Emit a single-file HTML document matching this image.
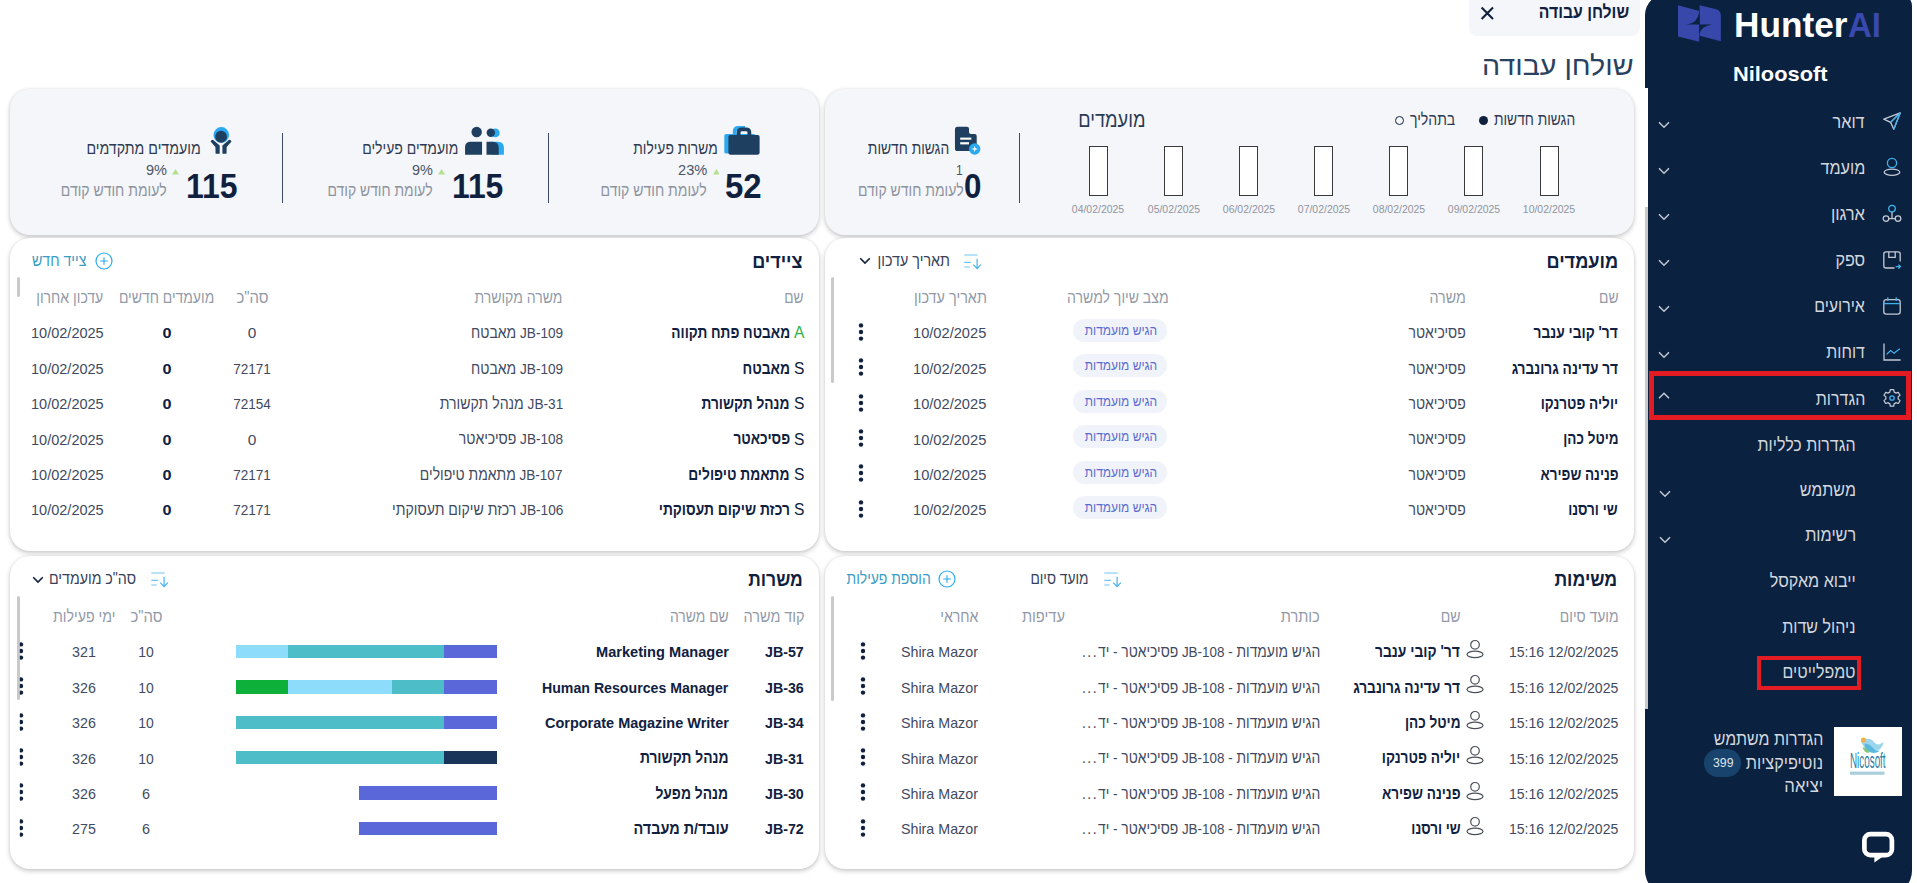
<!DOCTYPE html><html lang="he"><head><meta charset="utf-8"><title>HunterAI</title><style>html,body{margin:0;padding:0;background:#fff;overflow:hidden}body{width:1917px;height:883px;position:relative;font-family:"Liberation Sans",sans-serif;}div,svg{box-sizing:border-box}</style></head><body>
<div style="position:absolute;left:10.3px;top:88.5px;width:809.2px;height:146.2px;background:#f5f6fa;border-radius:20px;box-shadow:0 2px 5px rgba(0,0,0,.21),0 0 3px rgba(0,0,0,.07);"></div>
<div style="position:absolute;left:825.0px;top:88.5px;width:809.0px;height:146.2px;background:#f5f6fa;border-radius:20px;box-shadow:0 2px 5px rgba(0,0,0,.21),0 0 3px rgba(0,0,0,.07);"></div>
<div style="position:absolute;left:10.3px;top:238.0px;width:809.2px;height:313.0px;background:#fff;border-radius:20px;box-shadow:0 2px 5px rgba(0,0,0,.21),0 0 3px rgba(0,0,0,.07);"></div>
<div style="position:absolute;left:825.0px;top:238.0px;width:809.0px;height:313.0px;background:#fff;border-radius:20px;box-shadow:0 2px 5px rgba(0,0,0,.21),0 0 3px rgba(0,0,0,.07);"></div>
<div style="position:absolute;left:10.3px;top:556.0px;width:809.2px;height:313.2px;background:#fff;border-radius:20px;box-shadow:0 2px 5px rgba(0,0,0,.21),0 0 3px rgba(0,0,0,.07);"></div>
<div style="position:absolute;left:825.0px;top:556.0px;width:809.0px;height:313.2px;background:#fff;border-radius:20px;box-shadow:0 2px 5px rgba(0,0,0,.21),0 0 3px rgba(0,0,0,.07);"></div>
<div style="position:absolute;left:1469.0px;top:0.0px;width:171.0px;height:36.0px;background:#f5f6fa;border-radius:0 0 8px 8px;"></div>
<svg style="position:absolute;left:1480px;top:6px" width="15" height="15" viewBox="0 0 15 15"><path d="M1.6 1.6 L13 13 M13 1.6 L1.6 13" stroke="#10213f" stroke-width="2.1" fill="none"/></svg>
<div style="position:absolute;left:1645.0px;top:-6.0px;width:267.0px;height:900.0px;background:#0b2140;border-radius:21px 12px 23px 23px;"></div>
<div style="position:absolute;left:1645.0px;top:88.0px;width:3.0px;height:119.0px;background:#fff;"></div>
<div style="position:absolute;left:1645.0px;top:207.0px;width:3.0px;height:502.0px;background:#c9c9c9;"></div>
<svg style="position:absolute;left:1670px;top:0px" width="60" height="48" viewBox="0 0 60 48"><path d="M8 5.2 L29.2 10.9 L29.2 41.8 L8 36.4 Z" fill="#3848aa"/><path d="M29.6 5.2 L46.2 9.3 Q50.8 10.6 50.8 15.2 L50.8 41.3 L29.6 35.7 Z" fill="#3848aa"/><path d="M16.6 24.6 Q27.6 23.4 29 12.4 L29.6 12.4 L29.6 24.6 Z" fill="#0b2140"/><path d="M29.2 24.4 L42 24.4 Q31.4 26 29.8 33 L29.2 33 Z" fill="#0b2140"/></svg>
<svg style="position:absolute;left:1882.4px;top:110.8px" width="20" height="20" viewBox="0 0 20 20"><path d="M18.2 1.8 L1.8 8.2 L8.6 11.4 L11.8 18.2 Z M8.6 11.4 L18.2 1.8" fill="none" stroke="#c3c9d3" stroke-width="1.3" stroke-linejoin="round"/><path d="M18.2 1.8 L11.8 18.2" stroke="#3fb2ee" stroke-width="1.3" fill="none"/><path d="M18.2 1.8 L8.6 11.4" stroke="#3fb2ee" stroke-width="1.3"/></svg>
<svg style="position:absolute;left:1657.8px;top:120.5px" width="12" height="8" viewBox="0 0 12 8"><path d="M1 1.2 L6 6.2 L11 1.2" fill="none" stroke="#c3c9d3" stroke-width="1.5"/></svg>
<svg style="position:absolute;left:1882.4px;top:157.2px" width="20" height="20" viewBox="0 0 20 20"><circle cx="10" cy="6" r="4.6" fill="none" stroke="#3fb2ee" stroke-width="1.3"/><ellipse cx="10" cy="15.2" rx="7.8" ry="3.1" fill="none" stroke="#c3c9d3" stroke-width="1.3"/></svg>
<svg style="position:absolute;left:1657.8px;top:166.5px" width="12" height="8" viewBox="0 0 12 8"><path d="M1 1.2 L6 6.2 L11 1.2" fill="none" stroke="#c3c9d3" stroke-width="1.5"/></svg>
<svg style="position:absolute;left:1882.4px;top:203.6px" width="20" height="20" viewBox="0 0 20 20"><circle cx="10" cy="4.6" r="3.3" fill="none" stroke="#3fb2ee" stroke-width="1.3"/><circle cx="4" cy="14.6" r="2.8" fill="none" stroke="#c3c9d3" stroke-width="1.3"/><circle cx="16" cy="14.6" r="2.8" fill="none" stroke="#c3c9d3" stroke-width="1.3"/><path d="M10 7.9 V14.6 M6.8 14.6 H13.2" stroke="#c3c9d3" stroke-width="1.3" fill="none"/></svg>
<svg style="position:absolute;left:1657.8px;top:212.5px" width="12" height="8" viewBox="0 0 12 8"><path d="M1 1.2 L6 6.2 L11 1.2" fill="none" stroke="#c3c9d3" stroke-width="1.5"/></svg>
<svg style="position:absolute;left:1882.4px;top:249.6px" width="20" height="20" viewBox="0 0 20 20"><path d="M12.5 18 H4 Q1.8 18 1.8 15.8 V4 Q1.8 1.8 4 1.8 H16 Q18.2 1.8 18.2 4 V11.5" fill="none" stroke="#c3c9d3" stroke-width="1.3"/><path d="M6.8 1.8 V7.4 H13.2 V1.8" fill="none" stroke="#c3c9d3" stroke-width="1.3"/><path d="M13.6 16.6 H18.2 M16.4 14.6 L18.4 16.6 L16.4 18.6" fill="none" stroke="#3fb2ee" stroke-width="1.3"/></svg>
<svg style="position:absolute;left:1657.8px;top:258.5px" width="12" height="8" viewBox="0 0 12 8"><path d="M1 1.2 L6 6.2 L11 1.2" fill="none" stroke="#c3c9d3" stroke-width="1.5"/></svg>
<svg style="position:absolute;left:1882.4px;top:295.8px" width="20" height="20" viewBox="0 0 20 20"><rect x="1.8" y="3.6" width="16.4" height="14.6" rx="2.4" fill="none" stroke="#c3c9d3" stroke-width="1.3"/><path d="M1.8 7.6 H18.2" stroke="#3fb2ee" stroke-width="1.3"/><path d="M5.8 1.2 V5 M14.2 1.2 V5" stroke="#3fb2ee" stroke-width="1.3"/></svg>
<svg style="position:absolute;left:1657.8px;top:304.5px" width="12" height="8" viewBox="0 0 12 8"><path d="M1 1.2 L6 6.2 L11 1.2" fill="none" stroke="#c3c9d3" stroke-width="1.5"/></svg>
<svg style="position:absolute;left:1882.4px;top:342.4px" width="20" height="20" viewBox="0 0 20 20"><path d="M2 1.6 V18 H18.6" fill="none" stroke="#c3c9d3" stroke-width="1.3"/><path d="M4.6 12.4 L8.6 8.6 L12 11.2 L17.8 6.8" fill="none" stroke="#3fb2ee" stroke-width="1.3"/></svg>
<svg style="position:absolute;left:1657.8px;top:350.8px" width="12" height="8" viewBox="0 0 12 8"><path d="M1 1.2 L6 6.2 L11 1.2" fill="none" stroke="#c3c9d3" stroke-width="1.5"/></svg>
<svg style="position:absolute;left:1882.4px;top:388px" width="20" height="20" viewBox="0 0 20 20"><path d="M8.3 1.6 h3.4 l.5 2.5 a6.3 6.3 0 0 1 1.7 1 l2.4-.8 1.7 2.9-1.9 1.7 a6.3 6.3 0 0 1 0 2 l1.9 1.7-1.7 2.9-2.4-.8 a6.3 6.3 0 0 1-1.7 1 l-.5 2.5 h-3.4 l-.5-2.5 a6.3 6.3 0 0 1-1.7-1 l-2.4.8-1.7-2.9 1.9-1.7 a6.3 6.3 0 0 1 0-2 l-1.9-1.7 1.7-2.9 2.4.8 a6.3 6.3 0 0 1 1.7-1 z" fill="none" stroke="#c3c9d3" stroke-width="1.25" stroke-linejoin="round"/><circle cx="10" cy="10" r="2.2" fill="none" stroke="#3fb2ee" stroke-width="1.3"/></svg>
<svg style="position:absolute;left:1657.8px;top:391.5px" width="12" height="8" viewBox="0 0 12 8"><path d="M1 6.2 L6 1.2 L11 6.2" fill="none" stroke="#c3c9d3" stroke-width="1.5"/></svg>
<div style="position:absolute;left:1648.5px;top:370.5px;width:262px;height:49px;border:5.3px solid #e31b23"></div>
<div style="position:absolute;left:1756.5px;top:656px;width:104.5px;height:34px;border:4.5px solid #e31b23"></div>
<svg style="position:absolute;left:1659px;top:490.0px" width="12" height="8" viewBox="0 0 12 8"><path d="M1 1.2 L6 6.2 L11 1.2" fill="none" stroke="#c3c9d3" stroke-width="1.5"/></svg>
<svg style="position:absolute;left:1659px;top:535.5px" width="12" height="8" viewBox="0 0 12 8"><path d="M1 1.2 L6 6.2 L11 1.2" fill="none" stroke="#c3c9d3" stroke-width="1.5"/></svg>
<div style="position:absolute;left:1833.7px;top:726.8px;width:68.5px;height:68.8px;background:#fff;"></div>
<svg style="position:absolute;left:1833.7px;top:726.8px" width="68.5" height="68.8" viewBox="0 0 68.5 68.8"><path d="M27 14.5 C31 10.5 37 11 40 15 C43 19 47 17.5 49.5 14.5 C49 21 44 25.5 38 25 C33 24.6 30 21 27 14.5 Z" fill="#9bd6ec"/><path d="M30.5 17 C34 16 37 18.5 39.5 21.5 C41.5 24 44 24.5 46 23.5 C43 26.5 38 26.5 34.5 24.5 C32 23 30.5 20.5 30.5 17 Z" fill="#5bb8dd"/><path d="M28.5 20 C31 20.5 33.5 22.5 35.5 25.5 C32.5 26.5 29.5 24.5 28.5 20 Z" fill="#86c96f"/><circle cx="29.5" cy="13" r="2.6" fill="#f3b04a"/><rect x="16" y="44.6" width="34.5" height="3.2" fill="#8fbdd2" opacity=".75"/></svg>
<div style="position:absolute;left:1704.0px;top:748.8px;width:37.0px;height:28.0px;background:#17436d;border-radius:14px;"></div>
<svg style="position:absolute;left:1860px;top:830px" width="36" height="34" viewBox="0 0 36 34"><rect x="4.4" y="4.2" width="27.5" height="21" rx="6" fill="none" stroke="#fff" stroke-width="4.7"/><path d="M14.4 24 V32.4 L26.5 24 Z" fill="#fff"/></svg>
<div style="position:absolute;left:1479px;top:116px;width:9px;height:9px;border-radius:50%;background:#10213f"></div>
<div style="position:absolute;left:1394.8px;top:115.8px;width:9.2px;height:9.2px;border-radius:50%;border:1.7px solid #10213f"></div>
<div style="position:absolute;left:1539.5px;top:146.3px;width:19.2px;height:50.2px;background:#fff;border:1.2px solid #3a3a3a"></div>
<div style="position:absolute;left:1464.3px;top:146.3px;width:19.2px;height:50.2px;background:#fff;border:1.2px solid #3a3a3a"></div>
<div style="position:absolute;left:1389.2px;top:146.3px;width:19.2px;height:50.2px;background:#fff;border:1.2px solid #3a3a3a"></div>
<div style="position:absolute;left:1314.0px;top:146.3px;width:19.2px;height:50.2px;background:#fff;border:1.2px solid #3a3a3a"></div>
<div style="position:absolute;left:1238.8px;top:146.3px;width:19.2px;height:50.2px;background:#fff;border:1.2px solid #3a3a3a"></div>
<div style="position:absolute;left:1163.7px;top:146.3px;width:19.2px;height:50.2px;background:#fff;border:1.2px solid #3a3a3a"></div>
<div style="position:absolute;left:1088.5px;top:146.3px;width:19.2px;height:50.2px;background:#fff;border:1.2px solid #3a3a3a"></div>
<div style="position:absolute;left:1019.0px;top:132.5px;width:1.0px;height:70.1px;background:#3a4a66;"></div>
<div style="position:absolute;left:548.0px;top:132.5px;width:1.0px;height:70.1px;background:#3a4a66;"></div>
<div style="position:absolute;left:282.0px;top:132.5px;width:1.0px;height:70.1px;background:#3a4a66;"></div>
<svg style="position:absolute;left:940px;top:120px" width="60" height="40" viewBox="0 0 60 40"><path d="M17.6 6.8 H27 Q29 6.8 29 8.8 V12 Q29 14.05 31 14.05 H34.7 Q36.7 14.05 36.7 16 V31 H17.6 Q14.95 31 14.95 28.4 V9.4 Q14.95 6.8 17.6 6.8 Z" fill="#1e3f5f"/><rect x="20.2" y="17.6" width="11.1" height="2.1" fill="#fff"/><rect x="20.2" y="22.2" width="8.8" height="2.2" fill="#fff"/><circle cx="34.7" cy="29" r="5.7" fill="#2aa9f0"/><path d="M34.7 25.8 L35.4 28.3 L37.9 29 L35.4 29.7 L34.7 32.2 L34 29.7 L31.5 29 L34 28.3 Z" fill="#fff"/></svg>
<svg style="position:absolute;left:715px;top:120px" width="60" height="40" viewBox="0 0 60 40"><path d="M19.7 14.2 V11.6 Q19.7 8.0 23.3 8.0 H30" fill="none" stroke="#2aa9f0" stroke-width="3.8"/><rect x="9.3" y="14.05" width="31" height="19.5" rx="1.6" fill="#2aa9f0"/><path d="M23.65 15.2 V12.6 Q23.65 9.4 26.9 9.4 H31.1 Q34.35 9.4 34.35 12.6 V15.2" fill="none" stroke="#1e3f5f" stroke-width="3.8"/><rect x="13.4" y="14.95" width="31.2" height="19.7" rx="1.8" fill="#1e3f5f"/></svg>
<svg style="position:absolute;left:455px;top:120px" width="60" height="40" viewBox="0 0 60 40"><circle cx="40.3" cy="12.9" r="4.4" fill="#2aa9f0"/><path d="M36.5 21.75 H42.9 Q48.9 21.75 48.9 27.8 V34.66 H36.5 Z" fill="#2aa9f0"/><circle cx="21.66" cy="12" r="5.2" fill="#1e3f5f"/><path d="M15.6 21.75 H27.05 V34.66 H10.06 V27.3 Q10.06 21.75 15.6 21.75 Z" fill="#1e3f5f"/><circle cx="35.8" cy="12.8" r="4.2" fill="#1e3f5f"/><path d="M31.5 21.75 H37.7 Q43.7 21.75 43.7 27.8 V34.66 H31.5 Z" fill="#1e3f5f"/></svg>
<svg style="position:absolute;left:200px;top:120px" width="50" height="40" viewBox="0 0 50 40"><circle cx="21.3" cy="14.9" r="7.8" fill="#2aa9f0"/><circle cx="21.06" cy="16.76" r="5.9" fill="#1e3f5f"/><path d="M10.6 21.6 Q11.2 19.6 13 19.8 L19.7 25.6 V33.7 H15.6 L15.4 27 Z" fill="#1e3f5f"/><path d="M31.5 21.6 Q30.9 19.6 29.1 19.8 L22.4 25.6 V33.7 H26.5 L26.7 27 Z" fill="#1e3f5f"/></svg>
<svg style="position:absolute;left:712.5px;top:169.4px" width="6.8" height="5.6" viewBox="0 0 10 8" preserveAspectRatio="none"><path d="M0 8 L5 0 L10 8 Z" fill="#b5e08f"/></svg>
<svg style="position:absolute;left:437.6px;top:169.4px" width="7.2" height="5.6" viewBox="0 0 10 8" preserveAspectRatio="none"><path d="M0 8 L5 0 L10 8 Z" fill="#b5e08f"/></svg>
<svg style="position:absolute;left:172.0px;top:169.4px" width="7.0" height="5.6" viewBox="0 0 10 8" preserveAspectRatio="none"><path d="M0 8 L5 0 L10 8 Z" fill="#b5e08f"/></svg>
<svg style="position:absolute;left:858.8px;top:257.3px" width="12" height="8" viewBox="0 0 12 8"><path d="M1.2 1.2 L6 6 L10.8 1.2" fill="none" stroke="#10213f" stroke-width="1.6"/></svg>
<svg style="position:absolute;left:964px;top:253.5px" width="18" height="16" viewBox="0 0 18 16"><path d="M0.3 1 H13.7 M0.3 8.4 H6.9 M0.3 13 H5.7" stroke="#6cc6f3" stroke-width="1.15" fill="none"/><path d="M13.1 4.8 V14.4 M9.3 10.6 L13.1 14.6 L16.9 10.6" stroke="#45b4f0" stroke-width="1.2" fill="none"/></svg>
<div style="position:absolute;left:830.9px;top:277.0px;width:3.3px;height:105.7px;background:#c9c9c9;border-radius:1.5px;"></div>
<div style="position:absolute;left:1073.0px;top:318.9px;width:94.4px;height:23.2px;background:#f1f3fb;border-radius:12px;"></div>
<svg style="position:absolute;left:858.2px;top:321.8px;" width="6" height="20" viewBox="0 0 6 20"><circle cx="3" cy="3.4" r="2.2" fill="#10213f"/><circle cx="3" cy="10" r="2.2" fill="#10213f"/><circle cx="3" cy="16.6" r="2.2" fill="#10213f"/></svg>
<div style="position:absolute;left:1073.0px;top:354.3px;width:94.4px;height:23.2px;background:#f1f3fb;border-radius:12px;"></div>
<svg style="position:absolute;left:858.2px;top:357.2px;" width="6" height="20" viewBox="0 0 6 20"><circle cx="3" cy="3.4" r="2.2" fill="#10213f"/><circle cx="3" cy="10" r="2.2" fill="#10213f"/><circle cx="3" cy="16.6" r="2.2" fill="#10213f"/></svg>
<div style="position:absolute;left:1073.0px;top:389.7px;width:94.4px;height:23.2px;background:#f1f3fb;border-radius:12px;"></div>
<svg style="position:absolute;left:858.2px;top:392.6px;" width="6" height="20" viewBox="0 0 6 20"><circle cx="3" cy="3.4" r="2.2" fill="#10213f"/><circle cx="3" cy="10" r="2.2" fill="#10213f"/><circle cx="3" cy="16.6" r="2.2" fill="#10213f"/></svg>
<div style="position:absolute;left:1073.0px;top:425.1px;width:94.4px;height:23.2px;background:#f1f3fb;border-radius:12px;"></div>
<svg style="position:absolute;left:858.2px;top:428.0px;" width="6" height="20" viewBox="0 0 6 20"><circle cx="3" cy="3.4" r="2.2" fill="#10213f"/><circle cx="3" cy="10" r="2.2" fill="#10213f"/><circle cx="3" cy="16.6" r="2.2" fill="#10213f"/></svg>
<div style="position:absolute;left:1073.0px;top:460.5px;width:94.4px;height:23.2px;background:#f1f3fb;border-radius:12px;"></div>
<svg style="position:absolute;left:858.2px;top:463.4px;" width="6" height="20" viewBox="0 0 6 20"><circle cx="3" cy="3.4" r="2.2" fill="#10213f"/><circle cx="3" cy="10" r="2.2" fill="#10213f"/><circle cx="3" cy="16.6" r="2.2" fill="#10213f"/></svg>
<div style="position:absolute;left:1073.0px;top:495.7px;width:94.4px;height:23.2px;background:#f1f3fb;border-radius:12px;"></div>
<svg style="position:absolute;left:858.2px;top:498.6px;" width="6" height="20" viewBox="0 0 6 20"><circle cx="3" cy="3.4" r="2.2" fill="#10213f"/><circle cx="3" cy="10" r="2.2" fill="#10213f"/><circle cx="3" cy="16.6" r="2.2" fill="#10213f"/></svg>
<svg style="position:absolute;left:94.5px;top:251.5px" width="18" height="18" viewBox="0 0 18 18"><circle cx="9" cy="9" r="8" fill="none" stroke="#2aa9f0" stroke-width="1.2"/><path d="M9 5.2 V12.8 M5.2 9 H12.8" stroke="#2aa9f0" stroke-width="1.1"/></svg>
<div style="position:absolute;left:16.8px;top:277.0px;width:3.1px;height:20.0px;background:#c9c9c9;border-radius:1.5px;"></div>
<svg style="position:absolute;left:937.5px;top:569.5px" width="18" height="18" viewBox="0 0 18 18"><circle cx="9" cy="9" r="8" fill="none" stroke="#2aa9f0" stroke-width="1.2"/><path d="M9 5.2 V12.8 M5.2 9 H12.8" stroke="#2aa9f0" stroke-width="1.1"/></svg>
<svg style="position:absolute;left:1104px;top:572px" width="18" height="16" viewBox="0 0 18 16"><path d="M0.3 1 H13.7 M0.3 8.4 H6.9 M0.3 13 H5.7" stroke="#6cc6f3" stroke-width="1.15" fill="none"/><path d="M13.1 4.8 V14.4 M9.3 10.6 L13.1 14.6 L16.9 10.6" stroke="#45b4f0" stroke-width="1.2" fill="none"/></svg>
<div style="position:absolute;left:830.9px;top:595.7px;width:3.1px;height:105.8px;background:#c9c9c9;border-radius:1.5px;"></div>
<svg style="position:absolute;left:1464.6px;top:638.9px" width="20" height="20" viewBox="0 0 20 20"><circle cx="10" cy="5.8" r="4.3" fill="none" stroke="#4a4f58" stroke-width="1.2"/><ellipse cx="10" cy="15.4" rx="8" ry="3.2" fill="none" stroke="#4a4f58" stroke-width="1.2"/></svg>
<svg style="position:absolute;left:859.6px;top:640.8px;" width="6" height="20" viewBox="0 0 6 20"><circle cx="3" cy="3.4" r="2.2" fill="#10213f"/><circle cx="3" cy="10" r="2.2" fill="#10213f"/><circle cx="3" cy="16.6" r="2.2" fill="#10213f"/></svg>
<svg style="position:absolute;left:1464.6px;top:674.3px" width="20" height="20" viewBox="0 0 20 20"><circle cx="10" cy="5.8" r="4.3" fill="none" stroke="#4a4f58" stroke-width="1.2"/><ellipse cx="10" cy="15.4" rx="8" ry="3.2" fill="none" stroke="#4a4f58" stroke-width="1.2"/></svg>
<svg style="position:absolute;left:859.6px;top:676.2px;" width="6" height="20" viewBox="0 0 6 20"><circle cx="3" cy="3.4" r="2.2" fill="#10213f"/><circle cx="3" cy="10" r="2.2" fill="#10213f"/><circle cx="3" cy="16.6" r="2.2" fill="#10213f"/></svg>
<svg style="position:absolute;left:1464.6px;top:709.7px" width="20" height="20" viewBox="0 0 20 20"><circle cx="10" cy="5.8" r="4.3" fill="none" stroke="#4a4f58" stroke-width="1.2"/><ellipse cx="10" cy="15.4" rx="8" ry="3.2" fill="none" stroke="#4a4f58" stroke-width="1.2"/></svg>
<svg style="position:absolute;left:859.6px;top:711.6px;" width="6" height="20" viewBox="0 0 6 20"><circle cx="3" cy="3.4" r="2.2" fill="#10213f"/><circle cx="3" cy="10" r="2.2" fill="#10213f"/><circle cx="3" cy="16.6" r="2.2" fill="#10213f"/></svg>
<svg style="position:absolute;left:1464.6px;top:745.1px" width="20" height="20" viewBox="0 0 20 20"><circle cx="10" cy="5.8" r="4.3" fill="none" stroke="#4a4f58" stroke-width="1.2"/><ellipse cx="10" cy="15.4" rx="8" ry="3.2" fill="none" stroke="#4a4f58" stroke-width="1.2"/></svg>
<svg style="position:absolute;left:859.6px;top:747.0px;" width="6" height="20" viewBox="0 0 6 20"><circle cx="3" cy="3.4" r="2.2" fill="#10213f"/><circle cx="3" cy="10" r="2.2" fill="#10213f"/><circle cx="3" cy="16.6" r="2.2" fill="#10213f"/></svg>
<svg style="position:absolute;left:1464.6px;top:780.5px" width="20" height="20" viewBox="0 0 20 20"><circle cx="10" cy="5.8" r="4.3" fill="none" stroke="#4a4f58" stroke-width="1.2"/><ellipse cx="10" cy="15.4" rx="8" ry="3.2" fill="none" stroke="#4a4f58" stroke-width="1.2"/></svg>
<svg style="position:absolute;left:859.6px;top:782.4px;" width="6" height="20" viewBox="0 0 6 20"><circle cx="3" cy="3.4" r="2.2" fill="#10213f"/><circle cx="3" cy="10" r="2.2" fill="#10213f"/><circle cx="3" cy="16.6" r="2.2" fill="#10213f"/></svg>
<svg style="position:absolute;left:1464.6px;top:815.7px" width="20" height="20" viewBox="0 0 20 20"><circle cx="10" cy="5.8" r="4.3" fill="none" stroke="#4a4f58" stroke-width="1.2"/><ellipse cx="10" cy="15.4" rx="8" ry="3.2" fill="none" stroke="#4a4f58" stroke-width="1.2"/></svg>
<svg style="position:absolute;left:859.6px;top:817.6px;" width="6" height="20" viewBox="0 0 6 20"><circle cx="3" cy="3.4" r="2.2" fill="#10213f"/><circle cx="3" cy="10" r="2.2" fill="#10213f"/><circle cx="3" cy="16.6" r="2.2" fill="#10213f"/></svg>
<svg style="position:absolute;left:31.8px;top:575.6px" width="12" height="8" viewBox="0 0 12 8"><path d="M1.2 1.2 L6 6 L10.8 1.2" fill="none" stroke="#10213f" stroke-width="1.6"/></svg>
<svg style="position:absolute;left:151px;top:572px" width="18" height="16" viewBox="0 0 18 16"><path d="M0.3 1 H13.7 M0.3 8.4 H6.9 M0.3 13 H5.7" stroke="#6cc6f3" stroke-width="1.15" fill="none"/><path d="M13.1 4.8 V14.4 M9.3 10.6 L13.1 14.6 L16.9 10.6" stroke="#45b4f0" stroke-width="1.2" fill="none"/></svg>
<div style="position:absolute;left:17.0px;top:595.7px;width:2.6px;height:104.3px;background:#c9c9c9;border-radius:1.5px;"></div>
<div style="position:absolute;left:235.5px;top:644.7px;width:52.4px;height:13.6px;background:#8ddcfc;"></div>
<div style="position:absolute;left:287.7px;top:644.7px;width:156.7px;height:13.6px;background:#4dbdc8;"></div>
<div style="position:absolute;left:444.2px;top:644.7px;width:52.4px;height:13.6px;background:#5a67d8;"></div>
<svg style="position:absolute;left:18.3px;top:640.8px;clip-path:inset(0 0 0 1.5px);" width="6" height="20" viewBox="0 0 6 20"><circle cx="3" cy="3.4" r="2.2" fill="#10213f"/><circle cx="3" cy="10" r="2.2" fill="#10213f"/><circle cx="3" cy="16.6" r="2.2" fill="#10213f"/></svg>
<div style="position:absolute;left:235.5px;top:680.1px;width:52.4px;height:13.6px;background:#0db039;"></div>
<div style="position:absolute;left:287.7px;top:680.1px;width:104.6px;height:13.6px;background:#8ddcfc;"></div>
<div style="position:absolute;left:392.0px;top:680.1px;width:52.4px;height:13.6px;background:#4dbdc8;"></div>
<div style="position:absolute;left:444.2px;top:680.1px;width:52.4px;height:13.6px;background:#5a67d8;"></div>
<svg style="position:absolute;left:18.3px;top:676.2px;clip-path:inset(0 0 0 1.5px);" width="6" height="20" viewBox="0 0 6 20"><circle cx="3" cy="3.4" r="2.2" fill="#10213f"/><circle cx="3" cy="10" r="2.2" fill="#10213f"/><circle cx="3" cy="16.6" r="2.2" fill="#10213f"/></svg>
<div style="position:absolute;left:235.5px;top:715.5px;width:208.9px;height:13.6px;background:#4dbdc8;"></div>
<div style="position:absolute;left:444.2px;top:715.5px;width:52.4px;height:13.6px;background:#5a67d8;"></div>
<svg style="position:absolute;left:18.3px;top:711.6px;clip-path:inset(0 0 0 1.5px);" width="6" height="20" viewBox="0 0 6 20"><circle cx="3" cy="3.4" r="2.2" fill="#10213f"/><circle cx="3" cy="10" r="2.2" fill="#10213f"/><circle cx="3" cy="16.6" r="2.2" fill="#10213f"/></svg>
<div style="position:absolute;left:235.5px;top:750.9px;width:208.9px;height:13.6px;background:#4dbdc8;"></div>
<div style="position:absolute;left:444.2px;top:750.9px;width:52.4px;height:13.6px;background:#1a3358;"></div>
<svg style="position:absolute;left:18.3px;top:747.0px;clip-path:inset(0 0 0 1.5px);" width="6" height="20" viewBox="0 0 6 20"><circle cx="3" cy="3.4" r="2.2" fill="#10213f"/><circle cx="3" cy="10" r="2.2" fill="#10213f"/><circle cx="3" cy="16.6" r="2.2" fill="#10213f"/></svg>
<div style="position:absolute;left:359.0px;top:786.3px;width:137.6px;height:13.6px;background:#5a67d8;"></div>
<svg style="position:absolute;left:18.3px;top:782.4px;clip-path:inset(0 0 0 1.5px);" width="6" height="20" viewBox="0 0 6 20"><circle cx="3" cy="3.4" r="2.2" fill="#10213f"/><circle cx="3" cy="10" r="2.2" fill="#10213f"/><circle cx="3" cy="16.6" r="2.2" fill="#10213f"/></svg>
<div style="position:absolute;left:359.0px;top:821.5px;width:137.6px;height:13.6px;background:#5a67d8;"></div>
<svg style="position:absolute;left:18.3px;top:817.6px;clip-path:inset(0 0 0 1.5px);" width="6" height="20" viewBox="0 0 6 20"><circle cx="3" cy="3.4" r="2.2" fill="#10213f"/><circle cx="3" cy="10" r="2.2" fill="#10213f"/><circle cx="3" cy="16.6" r="2.2" fill="#10213f"/></svg>
<div dir="rtl" style="position:absolute;top:3px;font-size:18px;line-height:18px;height:18px;color:#10213f;white-space:nowrap;font-weight:bold;right:288.40px;transform-origin:100% 50%;transform:scaleX(0.8760);"><span>שולחן עבודה</span></div>
<div dir="rtl" style="position:absolute;top:52px;font-size:27.5px;line-height:27.5px;height:27.5px;color:#2a4262;white-space:nowrap;right:283.60px;transform-origin:100% 50%;transform:scaleX(1.0407);"><span>שולחן עבודה</span></div>
<div dir="ltr" style="position:absolute;top:8px;font-size:34.5px;line-height:34.5px;height:34.5px;color:#fff;white-space:nowrap;font-weight:bold;left:1734.00px;transform-origin:0 50%;transform:scaleX(1.0209);"><span>Hunter</span></div>
<div dir="ltr" style="position:absolute;top:8px;font-size:34.5px;line-height:34.5px;height:34.5px;color:#3a49ad;white-space:nowrap;font-weight:bold;left:1848.00px;transform-origin:0 50%;transform:scaleX(0.9565);"><span>AI</span></div>
<div dir="ltr" style="position:absolute;top:63px;font-size:21px;line-height:21px;height:21px;color:#fff;white-space:nowrap;font-weight:bold;left:1732.50px;transform-origin:0 50%;transform:scaleX(1.0386);"><span>Niloosoft</span></div>
<div dir="rtl" style="position:absolute;top:113px;font-size:18.5px;line-height:18.5px;height:18.5px;color:#d3d7de;white-space:nowrap;right:52.10px;transform-origin:100% 50%;transform:scaleX(0.8752);"><span>דואר</span></div>
<div dir="rtl" style="position:absolute;top:159px;font-size:18.5px;line-height:18.5px;height:18.5px;color:#d3d7de;white-space:nowrap;right:52.10px;transform-origin:100% 50%;transform:scaleX(0.8722);"><span>מועמד</span></div>
<div dir="rtl" style="position:absolute;top:205px;font-size:18.5px;line-height:18.5px;height:18.5px;color:#d3d7de;white-space:nowrap;right:52.10px;transform-origin:100% 50%;transform:scaleX(0.8944);"><span>ארגון</span></div>
<div dir="rtl" style="position:absolute;top:251px;font-size:18.5px;line-height:18.5px;height:18.5px;color:#d3d7de;white-space:nowrap;right:52.10px;transform-origin:100% 50%;transform:scaleX(0.8695);"><span>ספק</span></div>
<div dir="rtl" style="position:absolute;top:297px;font-size:18.5px;line-height:18.5px;height:18.5px;color:#d3d7de;white-space:nowrap;right:52.10px;transform-origin:100% 50%;transform:scaleX(0.8611);"><span>אירועים</span></div>
<div dir="rtl" style="position:absolute;top:343px;font-size:18.5px;line-height:18.5px;height:18.5px;color:#d3d7de;white-space:nowrap;right:52.10px;transform-origin:100% 50%;transform:scaleX(0.8588);"><span>דוחות</span></div>
<div dir="rtl" style="position:absolute;top:390px;font-size:18.5px;line-height:18.5px;height:18.5px;color:#d3d7de;white-space:nowrap;right:52.10px;transform-origin:100% 50%;transform:scaleX(0.8642);"><span>הגדרות</span></div>
<div dir="rtl" style="position:absolute;top:436px;font-size:18.5px;line-height:18.5px;height:18.5px;color:#d3d7de;white-space:nowrap;right:61.10px;transform-origin:100% 50%;transform:scaleX(0.8628);"><span>הגדרות כלליות</span></div>
<div dir="rtl" style="position:absolute;top:481px;font-size:18.5px;line-height:18.5px;height:18.5px;color:#d3d7de;white-space:nowrap;right:61.10px;transform-origin:100% 50%;transform:scaleX(0.8634);"><span>משתמש</span></div>
<div dir="rtl" style="position:absolute;top:526px;font-size:18.5px;line-height:18.5px;height:18.5px;color:#d3d7de;white-space:nowrap;right:61.10px;transform-origin:100% 50%;transform:scaleX(0.8774);"><span>רשימות</span></div>
<div dir="rtl" style="position:absolute;top:572px;font-size:18.5px;line-height:18.5px;height:18.5px;color:#d3d7de;white-space:nowrap;right:61.10px;transform-origin:100% 50%;transform:scaleX(0.8716);"><span>ייבוא מאקסל</span></div>
<div dir="rtl" style="position:absolute;top:618px;font-size:18.5px;line-height:18.5px;height:18.5px;color:#d3d7de;white-space:nowrap;right:61.10px;transform-origin:100% 50%;transform:scaleX(0.8679);"><span>ניהול שדות</span></div>
<div dir="rtl" style="position:absolute;top:663px;font-size:18.5px;line-height:18.5px;height:18.5px;color:#d3d7de;white-space:nowrap;right:61.10px;transform-origin:100% 50%;transform:scaleX(0.8634);"><span>טמפלייטים</span></div>
<div dir="ltr" style="position:absolute;top:750px;font-size:22.5px;line-height:22.5px;height:22.5px;color:#2e7fa8;white-space:nowrap;left:1849.60px;transform-origin:0 50%;transform:scaleX(0.4380);"><span>Nicosoft</span></div>
<div dir="rtl" style="position:absolute;top:730px;font-size:18.5px;line-height:18.5px;height:18.5px;color:#d3d7de;white-space:nowrap;right:93.50px;transform-origin:100% 50%;transform:scaleX(0.8612);"><span>הגדרות משתמש</span></div>
<div dir="rtl" style="position:absolute;top:754px;font-size:18.5px;line-height:18.5px;height:18.5px;color:#d3d7de;white-space:nowrap;right:93.80px;transform-origin:100% 50%;transform:scaleX(0.8784);"><span>נוטיפיקציות</span></div>
<div dir="rtl" style="position:absolute;top:777px;font-size:18.5px;line-height:18.5px;height:18.5px;color:#d3d7de;white-space:nowrap;right:93.80px;transform-origin:100% 50%;transform:scaleX(0.8990);"><span>יציאה</span></div>
<div dir="ltr" style="position:absolute;top:757px;font-size:12.5px;line-height:12.5px;height:12.5px;color:#dfe6ee;white-space:nowrap;left:1713.00px;transform-origin:0 50%;transform:scaleX(0.9828);"><span>399</span></div>
<div dir="rtl" style="position:absolute;top:111px;font-size:16.5px;line-height:16.5px;height:16.5px;color:#2e3a4f;white-space:nowrap;right:341.50px;transform-origin:100% 50%;transform:scaleX(0.8358);"><span>הגשות חדשות</span></div>
<div dir="rtl" style="position:absolute;top:111px;font-size:16.5px;line-height:16.5px;height:16.5px;color:#2e3a4f;white-space:nowrap;right:461.80px;transform-origin:100% 50%;transform:scaleX(0.8507);"><span>בתהליך</span></div>
<div dir="rtl" style="position:absolute;top:109px;font-size:21px;line-height:21px;height:21px;color:#2a3b55;white-space:nowrap;right:771.10px;transform-origin:100% 50%;transform:scaleX(0.8676);"><span>מועמדים</span></div>
<div dir="ltr" style="position:absolute;top:204px;font-size:11.4px;line-height:11.4px;height:11.4px;color:#8f949e;white-space:nowrap;left:1249.35px;width:600px;text-align:center;transform-origin:50% 50%;transform:scaleX(0.9173);"><span>10/02/2025</span></div>
<div dir="ltr" style="position:absolute;top:204px;font-size:11.4px;line-height:11.4px;height:11.4px;color:#8f949e;white-space:nowrap;left:1174.18px;width:600px;text-align:center;transform-origin:50% 50%;transform:scaleX(0.9173);"><span>09/02/2025</span></div>
<div dir="ltr" style="position:absolute;top:204px;font-size:11.4px;line-height:11.4px;height:11.4px;color:#8f949e;white-space:nowrap;left:1099.01px;width:600px;text-align:center;transform-origin:50% 50%;transform:scaleX(0.9173);"><span>08/02/2025</span></div>
<div dir="ltr" style="position:absolute;top:204px;font-size:11.4px;line-height:11.4px;height:11.4px;color:#8f949e;white-space:nowrap;left:1023.84px;width:600px;text-align:center;transform-origin:50% 50%;transform:scaleX(0.9173);"><span>07/02/2025</span></div>
<div dir="ltr" style="position:absolute;top:204px;font-size:11.4px;line-height:11.4px;height:11.4px;color:#8f949e;white-space:nowrap;left:948.67px;width:600px;text-align:center;transform-origin:50% 50%;transform:scaleX(0.9173);"><span>06/02/2025</span></div>
<div dir="ltr" style="position:absolute;top:204px;font-size:11.4px;line-height:11.4px;height:11.4px;color:#8f949e;white-space:nowrap;left:873.50px;width:600px;text-align:center;transform-origin:50% 50%;transform:scaleX(0.9173);"><span>05/02/2025</span></div>
<div dir="ltr" style="position:absolute;top:204px;font-size:11.4px;line-height:11.4px;height:11.4px;color:#8f949e;white-space:nowrap;left:798.33px;width:600px;text-align:center;transform-origin:50% 50%;transform:scaleX(0.9173);"><span>04/02/2025</span></div>
<div dir="rtl" style="position:absolute;top:140px;font-size:16.5px;line-height:16.5px;height:16.5px;color:#2e3a4f;white-space:nowrap;right:968.30px;transform-origin:100% 50%;transform:scaleX(0.8368);"><span>הגשות חדשות</span></div>
<div dir="ltr" style="position:absolute;top:169px;font-size:34.5px;line-height:34.5px;height:34.5px;color:#10213f;white-space:nowrap;font-weight:bold;left:964.00px;transform-origin:0 50%;transform:scaleX(0.9068);"><span>0</span></div>
<div dir="ltr" style="position:absolute;top:163px;font-size:14.5px;line-height:14.5px;height:14.5px;color:#4a5568;white-space:nowrap;left:956.00px;transform-origin:0 50%;transform:scaleX(0.8294);"><span>1</span></div>
<div dir="rtl" style="position:absolute;top:182px;font-size:16.5px;line-height:16.5px;height:16.5px;color:#8d939e;white-space:nowrap;right:953.80px;transform-origin:100% 50%;transform:scaleX(0.8477);"><span>לעומת חודש קודם</span></div>
<div dir="rtl" style="position:absolute;top:140px;font-size:16.5px;line-height:16.5px;height:16.5px;color:#2e3a4f;white-space:nowrap;right:1199.40px;transform-origin:100% 50%;transform:scaleX(0.8382);"><span>משרות פעילות</span></div>
<div dir="ltr" style="position:absolute;top:169px;font-size:34.5px;line-height:34.5px;height:34.5px;color:#10213f;white-space:nowrap;font-weight:bold;left:725.30px;transform-origin:0 50%;transform:scaleX(0.9537);"><span>52</span></div>
<div dir="ltr" style="position:absolute;top:162px;font-size:15px;line-height:15px;height:15px;color:#4a5568;white-space:nowrap;left:677.70px;transform-origin:0 50%;transform:scaleX(0.9757);"><span>23%</span></div>
<div dir="rtl" style="position:absolute;top:182px;font-size:16.5px;line-height:16.5px;height:16.5px;color:#8d939e;white-space:nowrap;right:1210.10px;transform-origin:100% 50%;transform:scaleX(0.8509);"><span>לעומת חודש קודם</span></div>
<div dir="rtl" style="position:absolute;top:140px;font-size:16.5px;line-height:16.5px;height:16.5px;color:#2e3a4f;white-space:nowrap;right:1458.90px;transform-origin:100% 50%;transform:scaleX(0.8474);"><span>מועמדים פעילים</span></div>
<div dir="ltr" style="position:absolute;top:169px;font-size:34.5px;line-height:34.5px;height:34.5px;color:#10213f;white-space:nowrap;font-weight:bold;left:452.20px;transform-origin:0 50%;transform:scaleX(0.9215);"><span>115</span></div>
<div dir="ltr" style="position:absolute;top:162px;font-size:15px;line-height:15px;height:15px;color:#4a5568;white-space:nowrap;left:411.90px;transform-origin:0 50%;transform:scaleX(0.9637);"><span>9%</span></div>
<div dir="rtl" style="position:absolute;top:182px;font-size:16.5px;line-height:16.5px;height:16.5px;color:#8d939e;white-space:nowrap;right:1484.30px;transform-origin:100% 50%;transform:scaleX(0.8428);"><span>לעומת חודש קודם</span></div>
<div dir="rtl" style="position:absolute;top:140px;font-size:16.5px;line-height:16.5px;height:16.5px;color:#2e3a4f;white-space:nowrap;right:1716.00px;transform-origin:100% 50%;transform:scaleX(0.8612);"><span>מועמדים מתקדמים</span></div>
<div dir="ltr" style="position:absolute;top:169px;font-size:34.5px;line-height:34.5px;height:34.5px;color:#10213f;white-space:nowrap;font-weight:bold;left:185.50px;transform-origin:0 50%;transform:scaleX(0.9251);"><span>115</span></div>
<div dir="ltr" style="position:absolute;top:162px;font-size:15px;line-height:15px;height:15px;color:#4a5568;white-space:nowrap;left:146.00px;transform-origin:0 50%;transform:scaleX(0.9683);"><span>9%</span></div>
<div dir="rtl" style="position:absolute;top:182px;font-size:16.5px;line-height:16.5px;height:16.5px;color:#8d939e;white-space:nowrap;right:1750.10px;transform-origin:100% 50%;transform:scaleX(0.8485);"><span>לעומת חודש קודם</span></div>
<div dir="rtl" style="position:absolute;top:252px;font-size:19.5px;line-height:19.5px;height:19.5px;color:#10213f;white-space:nowrap;font-weight:bold;right:299.10px;transform-origin:100% 50%;transform:scaleX(0.9293);"><span>מועמדים</span></div>
<div dir="rtl" style="position:absolute;top:253px;font-size:16px;line-height:16px;height:16px;color:#36425a;white-space:nowrap;right:967.20px;transform-origin:100% 50%;transform:scaleX(0.8938);"><span>תאריך עדכון</span></div>
<div dir="rtl" style="position:absolute;top:290px;font-size:16px;line-height:16px;height:16px;color:#929aa8;white-space:nowrap;right:298.60px;transform-origin:100% 50%;transform:scaleX(0.8655);"><span>שם</span></div>
<div dir="rtl" style="position:absolute;top:290px;font-size:16px;line-height:16px;height:16px;color:#929aa8;white-space:nowrap;right:451.10px;transform-origin:100% 50%;transform:scaleX(0.8911);"><span>משרה</span></div>
<div dir="rtl" style="position:absolute;top:290px;font-size:16px;line-height:16px;height:16px;color:#929aa8;white-space:nowrap;right:748.10px;transform-origin:100% 50%;transform:scaleX(0.8789);"><span>מצב שיוך למשרה</span></div>
<div dir="rtl" style="position:absolute;top:290px;font-size:16px;line-height:16px;height:16px;color:#929aa8;white-space:nowrap;right:930.50px;transform-origin:100% 50%;transform:scaleX(0.9012);"><span>תאריך עדכון</span></div>
<div dir="rtl" style="position:absolute;top:325px;font-size:16px;line-height:16px;height:16px;color:#10213f;white-space:nowrap;font-weight:bold;right:298.90px;transform-origin:100% 50%;transform:scaleX(0.8626);"><span>דר' קובי ענבר</span></div>
<div dir="rtl" style="position:absolute;top:325px;font-size:16px;line-height:16px;height:16px;color:#3f4a60;white-space:nowrap;right:451.30px;transform-origin:100% 50%;transform:scaleX(0.8708);"><span>פסיכיאטר</span></div>
<div dir="rtl" style="position:absolute;top:324px;font-size:13.6px;line-height:13.6px;height:13.6px;color:#5b6bd0;white-space:nowrap;right:759.70px;transform-origin:100% 50%;transform:scaleX(0.8809);"><span>הגיש מועמדות</span></div>
<div dir="ltr" style="position:absolute;top:325px;font-size:15px;line-height:15px;height:15px;color:#3f4a60;white-space:nowrap;left:913.30px;transform-origin:0 50%;transform:scaleX(0.9763);"><span>10/02/2025</span></div>
<div dir="rtl" style="position:absolute;top:361px;font-size:16px;line-height:16px;height:16px;color:#10213f;white-space:nowrap;font-weight:bold;right:298.90px;transform-origin:100% 50%;transform:scaleX(0.8573);"><span>דר עדינה גרונברג</span></div>
<div dir="rtl" style="position:absolute;top:361px;font-size:16px;line-height:16px;height:16px;color:#3f4a60;white-space:nowrap;right:451.30px;transform-origin:100% 50%;transform:scaleX(0.8708);"><span>פסיכיאטר</span></div>
<div dir="rtl" style="position:absolute;top:359px;font-size:13.6px;line-height:13.6px;height:13.6px;color:#5b6bd0;white-space:nowrap;right:759.70px;transform-origin:100% 50%;transform:scaleX(0.8809);"><span>הגיש מועמדות</span></div>
<div dir="ltr" style="position:absolute;top:361px;font-size:15px;line-height:15px;height:15px;color:#3f4a60;white-space:nowrap;left:913.30px;transform-origin:0 50%;transform:scaleX(0.9763);"><span>10/02/2025</span></div>
<div dir="rtl" style="position:absolute;top:396px;font-size:16px;line-height:16px;height:16px;color:#10213f;white-space:nowrap;font-weight:bold;right:298.90px;transform-origin:100% 50%;transform:scaleX(0.8497);"><span>יוליה פטרנקו</span></div>
<div dir="rtl" style="position:absolute;top:396px;font-size:16px;line-height:16px;height:16px;color:#3f4a60;white-space:nowrap;right:451.30px;transform-origin:100% 50%;transform:scaleX(0.8708);"><span>פסיכיאטר</span></div>
<div dir="rtl" style="position:absolute;top:395px;font-size:13.6px;line-height:13.6px;height:13.6px;color:#5b6bd0;white-space:nowrap;right:759.70px;transform-origin:100% 50%;transform:scaleX(0.8809);"><span>הגיש מועמדות</span></div>
<div dir="ltr" style="position:absolute;top:396px;font-size:15px;line-height:15px;height:15px;color:#3f4a60;white-space:nowrap;left:913.30px;transform-origin:0 50%;transform:scaleX(0.9763);"><span>10/02/2025</span></div>
<div dir="rtl" style="position:absolute;top:431px;font-size:16px;line-height:16px;height:16px;color:#10213f;white-space:nowrap;font-weight:bold;right:298.90px;transform-origin:100% 50%;transform:scaleX(0.8437);"><span>מיטל כהן</span></div>
<div dir="rtl" style="position:absolute;top:431px;font-size:16px;line-height:16px;height:16px;color:#3f4a60;white-space:nowrap;right:451.30px;transform-origin:100% 50%;transform:scaleX(0.8708);"><span>פסיכיאטר</span></div>
<div dir="rtl" style="position:absolute;top:430px;font-size:13.6px;line-height:13.6px;height:13.6px;color:#5b6bd0;white-space:nowrap;right:759.70px;transform-origin:100% 50%;transform:scaleX(0.8809);"><span>הגיש מועמדות</span></div>
<div dir="ltr" style="position:absolute;top:432px;font-size:15px;line-height:15px;height:15px;color:#3f4a60;white-space:nowrap;left:913.30px;transform-origin:0 50%;transform:scaleX(0.9763);"><span>10/02/2025</span></div>
<div dir="rtl" style="position:absolute;top:467px;font-size:16px;line-height:16px;height:16px;color:#10213f;white-space:nowrap;font-weight:bold;right:298.90px;transform-origin:100% 50%;transform:scaleX(0.8424);"><span>פנינה שפירא</span></div>
<div dir="rtl" style="position:absolute;top:467px;font-size:16px;line-height:16px;height:16px;color:#3f4a60;white-space:nowrap;right:451.30px;transform-origin:100% 50%;transform:scaleX(0.8708);"><span>פסיכיאטר</span></div>
<div dir="rtl" style="position:absolute;top:466px;font-size:13.6px;line-height:13.6px;height:13.6px;color:#5b6bd0;white-space:nowrap;right:759.70px;transform-origin:100% 50%;transform:scaleX(0.8809);"><span>הגיש מועמדות</span></div>
<div dir="ltr" style="position:absolute;top:467px;font-size:15px;line-height:15px;height:15px;color:#3f4a60;white-space:nowrap;left:913.30px;transform-origin:0 50%;transform:scaleX(0.9763);"><span>10/02/2025</span></div>
<div dir="rtl" style="position:absolute;top:502px;font-size:16px;line-height:16px;height:16px;color:#10213f;white-space:nowrap;font-weight:bold;right:298.90px;transform-origin:100% 50%;transform:scaleX(0.8443);"><span>שי ורסנו</span></div>
<div dir="rtl" style="position:absolute;top:502px;font-size:16px;line-height:16px;height:16px;color:#3f4a60;white-space:nowrap;right:451.30px;transform-origin:100% 50%;transform:scaleX(0.8708);"><span>פסיכיאטר</span></div>
<div dir="rtl" style="position:absolute;top:501px;font-size:13.6px;line-height:13.6px;height:13.6px;color:#5b6bd0;white-space:nowrap;right:759.70px;transform-origin:100% 50%;transform:scaleX(0.8809);"><span>הגיש מועמדות</span></div>
<div dir="ltr" style="position:absolute;top:502px;font-size:15px;line-height:15px;height:15px;color:#3f4a60;white-space:nowrap;left:913.30px;transform-origin:0 50%;transform:scaleX(0.9763);"><span>10/02/2025</span></div>
<div dir="rtl" style="position:absolute;top:252px;font-size:19.5px;line-height:19.5px;height:19.5px;color:#10213f;white-space:nowrap;font-weight:bold;right:1114.00px;transform-origin:100% 50%;transform:scaleX(0.9242);"><span>ציידים</span></div>
<div dir="rtl" style="position:absolute;top:253px;font-size:16px;line-height:16px;height:16px;color:#3a9dc4;white-space:nowrap;right:1830.10px;transform-origin:100% 50%;transform:scaleX(0.8873);"><span>צייד חדש</span></div>
<div dir="rtl" style="position:absolute;top:290px;font-size:16px;line-height:16px;height:16px;color:#929aa8;white-space:nowrap;right:1113.10px;transform-origin:100% 50%;transform:scaleX(0.8566);"><span>שם</span></div>
<div dir="rtl" style="position:absolute;top:290px;font-size:16px;line-height:16px;height:16px;color:#929aa8;white-space:nowrap;right:1354.50px;transform-origin:100% 50%;transform:scaleX(0.8764);"><span>משרה מקושרת</span></div>
<div dir="rtl" style="position:absolute;top:290px;font-size:16px;line-height:16px;height:16px;color:#929aa8;white-space:nowrap;right:1648.30px;transform-origin:100% 50%;transform:scaleX(0.9259);"><span>סה"כ</span></div>
<div dir="rtl" style="position:absolute;top:290px;font-size:16px;line-height:16px;height:16px;color:#929aa8;white-space:nowrap;right:1702.30px;transform-origin:100% 50%;transform:scaleX(0.8726);"><span>מועמדים חדשים</span></div>
<div dir="rtl" style="position:absolute;top:290px;font-size:16px;line-height:16px;height:16px;color:#929aa8;white-space:nowrap;right:1813.40px;transform-origin:100% 50%;transform:scaleX(0.8781);"><span>עדכון אחרון</span></div>
<div dir="ltr" style="position:absolute;top:325px;font-size:16px;line-height:16px;height:16px;color:#2fb344;white-space:nowrap;left:794.20px;transform-origin:0 50%;transform:scaleX(0.9745);"><span>A</span></div>
<div dir="rtl" style="position:absolute;top:325px;font-size:16px;line-height:16px;height:16px;color:#10213f;white-space:nowrap;font-weight:bold;right:1127.10px;transform-origin:100% 50%;transform:scaleX(0.8541);"><span>מאבטח פתח תקווה</span></div>
<div dir="rtl" style="position:absolute;top:325px;font-size:16px;line-height:16px;height:16px;color:#3f4a60;white-space:nowrap;right:1354.10px;transform-origin:100% 50%;transform:scaleX(0.8755);"><span><span style="font-size:0.97em;line-height:0">JB-109 </span>מאבטח</span></div>
<div dir="ltr" style="position:absolute;top:325px;font-size:15px;line-height:15px;height:15px;color:#3f4a60;white-space:nowrap;left:-47.90px;width:600px;text-align:center;transform-origin:50% 50%;transform:scaleX(1.0307);"><span>0</span></div>
<div dir="ltr" style="position:absolute;top:325px;font-size:15px;line-height:15px;height:15px;color:#10213f;white-space:nowrap;font-weight:bold;left:-133.40px;width:600px;text-align:center;transform-origin:50% 50%;transform:scaleX(1.0787);"><span>0</span></div>
<div dir="ltr" style="position:absolute;top:325px;font-size:15px;line-height:15px;height:15px;color:#3f4a60;white-space:nowrap;left:31.00px;transform-origin:0 50%;transform:scaleX(0.9683);"><span>10/02/2025</span></div>
<div dir="ltr" style="position:absolute;top:361px;font-size:16px;line-height:16px;height:16px;color:#10213f;white-space:nowrap;left:794.20px;transform-origin:0 50%;transform:scaleX(0.9745);"><span>S</span></div>
<div dir="rtl" style="position:absolute;top:361px;font-size:16px;line-height:16px;height:16px;color:#10213f;white-space:nowrap;font-weight:bold;right:1127.10px;transform-origin:100% 50%;transform:scaleX(0.8639);"><span>מאבטח</span></div>
<div dir="rtl" style="position:absolute;top:361px;font-size:16px;line-height:16px;height:16px;color:#3f4a60;white-space:nowrap;right:1354.10px;transform-origin:100% 50%;transform:scaleX(0.8755);"><span><span style="font-size:0.97em;line-height:0">JB-109 </span>מאבטח</span></div>
<div dir="ltr" style="position:absolute;top:361px;font-size:15px;line-height:15px;height:15px;color:#3f4a60;white-space:nowrap;left:-47.90px;width:600px;text-align:center;transform-origin:50% 50%;transform:scaleX(0.9037);"><span>72171</span></div>
<div dir="ltr" style="position:absolute;top:361px;font-size:15px;line-height:15px;height:15px;color:#10213f;white-space:nowrap;font-weight:bold;left:-133.40px;width:600px;text-align:center;transform-origin:50% 50%;transform:scaleX(1.0787);"><span>0</span></div>
<div dir="ltr" style="position:absolute;top:361px;font-size:15px;line-height:15px;height:15px;color:#3f4a60;white-space:nowrap;left:31.00px;transform-origin:0 50%;transform:scaleX(0.9683);"><span>10/02/2025</span></div>
<div dir="ltr" style="position:absolute;top:396px;font-size:16px;line-height:16px;height:16px;color:#10213f;white-space:nowrap;left:794.20px;transform-origin:0 50%;transform:scaleX(0.9745);"><span>S</span></div>
<div dir="rtl" style="position:absolute;top:396px;font-size:16px;line-height:16px;height:16px;color:#10213f;white-space:nowrap;font-weight:bold;right:1127.10px;transform-origin:100% 50%;transform:scaleX(0.8587);"><span>מנהל תקשורת</span></div>
<div dir="rtl" style="position:absolute;top:396px;font-size:16px;line-height:16px;height:16px;color:#3f4a60;white-space:nowrap;right:1354.10px;transform-origin:100% 50%;transform:scaleX(0.8804);"><span><span style="font-size:0.97em;line-height:0">JB-31 </span>מנהל תקשורת</span></div>
<div dir="ltr" style="position:absolute;top:396px;font-size:15px;line-height:15px;height:15px;color:#3f4a60;white-space:nowrap;left:-47.90px;width:600px;text-align:center;transform-origin:50% 50%;transform:scaleX(0.9037);"><span>72154</span></div>
<div dir="ltr" style="position:absolute;top:396px;font-size:15px;line-height:15px;height:15px;color:#10213f;white-space:nowrap;font-weight:bold;left:-133.40px;width:600px;text-align:center;transform-origin:50% 50%;transform:scaleX(1.0787);"><span>0</span></div>
<div dir="ltr" style="position:absolute;top:396px;font-size:15px;line-height:15px;height:15px;color:#3f4a60;white-space:nowrap;left:31.00px;transform-origin:0 50%;transform:scaleX(0.9683);"><span>10/02/2025</span></div>
<div dir="ltr" style="position:absolute;top:432px;font-size:16px;line-height:16px;height:16px;color:#10213f;white-space:nowrap;left:794.20px;transform-origin:0 50%;transform:scaleX(0.9745);"><span>S</span></div>
<div dir="rtl" style="position:absolute;top:431px;font-size:16px;line-height:16px;height:16px;color:#10213f;white-space:nowrap;font-weight:bold;right:1127.10px;transform-origin:100% 50%;transform:scaleX(0.8577);"><span>פסיכאטר</span></div>
<div dir="rtl" style="position:absolute;top:431px;font-size:16px;line-height:16px;height:16px;color:#3f4a60;white-space:nowrap;right:1354.10px;transform-origin:100% 50%;transform:scaleX(0.8760);"><span><span style="font-size:0.97em;line-height:0">JB-108 </span>פסיכיאטר</span></div>
<div dir="ltr" style="position:absolute;top:432px;font-size:15px;line-height:15px;height:15px;color:#3f4a60;white-space:nowrap;left:-47.90px;width:600px;text-align:center;transform-origin:50% 50%;transform:scaleX(1.0307);"><span>0</span></div>
<div dir="ltr" style="position:absolute;top:432px;font-size:15px;line-height:15px;height:15px;color:#10213f;white-space:nowrap;font-weight:bold;left:-133.40px;width:600px;text-align:center;transform-origin:50% 50%;transform:scaleX(1.0787);"><span>0</span></div>
<div dir="ltr" style="position:absolute;top:432px;font-size:15px;line-height:15px;height:15px;color:#3f4a60;white-space:nowrap;left:31.00px;transform-origin:0 50%;transform:scaleX(0.9683);"><span>10/02/2025</span></div>
<div dir="ltr" style="position:absolute;top:467px;font-size:16px;line-height:16px;height:16px;color:#10213f;white-space:nowrap;left:794.20px;transform-origin:0 50%;transform:scaleX(0.9745);"><span>S</span></div>
<div dir="rtl" style="position:absolute;top:467px;font-size:16px;line-height:16px;height:16px;color:#10213f;white-space:nowrap;font-weight:bold;right:1127.10px;transform-origin:100% 50%;transform:scaleX(0.8620);"><span>מתאמת טיפולים</span></div>
<div dir="rtl" style="position:absolute;top:467px;font-size:16px;line-height:16px;height:16px;color:#3f4a60;white-space:nowrap;right:1354.10px;transform-origin:100% 50%;transform:scaleX(0.8725);"><span><span style="font-size:0.97em;line-height:0">JB-107 </span>מתאמת טיפולים</span></div>
<div dir="ltr" style="position:absolute;top:467px;font-size:15px;line-height:15px;height:15px;color:#3f4a60;white-space:nowrap;left:-47.90px;width:600px;text-align:center;transform-origin:50% 50%;transform:scaleX(0.9037);"><span>72171</span></div>
<div dir="ltr" style="position:absolute;top:467px;font-size:15px;line-height:15px;height:15px;color:#10213f;white-space:nowrap;font-weight:bold;left:-133.40px;width:600px;text-align:center;transform-origin:50% 50%;transform:scaleX(1.0787);"><span>0</span></div>
<div dir="ltr" style="position:absolute;top:467px;font-size:15px;line-height:15px;height:15px;color:#3f4a60;white-space:nowrap;left:31.00px;transform-origin:0 50%;transform:scaleX(0.9683);"><span>10/02/2025</span></div>
<div dir="ltr" style="position:absolute;top:502px;font-size:16px;line-height:16px;height:16px;color:#10213f;white-space:nowrap;left:794.20px;transform-origin:0 50%;transform:scaleX(0.9745);"><span>S</span></div>
<div dir="rtl" style="position:absolute;top:502px;font-size:16px;line-height:16px;height:16px;color:#10213f;white-space:nowrap;font-weight:bold;right:1127.10px;transform-origin:100% 50%;transform:scaleX(0.8634);"><span>רכזת שיקום תעסוקתי</span></div>
<div dir="rtl" style="position:absolute;top:502px;font-size:16px;line-height:16px;height:16px;color:#3f4a60;white-space:nowrap;right:1354.10px;transform-origin:100% 50%;transform:scaleX(0.8813);"><span><span style="font-size:0.97em;line-height:0">JB-106 </span>רכזת שיקום תעסוקתי</span></div>
<div dir="ltr" style="position:absolute;top:502px;font-size:15px;line-height:15px;height:15px;color:#3f4a60;white-space:nowrap;left:-47.90px;width:600px;text-align:center;transform-origin:50% 50%;transform:scaleX(0.9037);"><span>72171</span></div>
<div dir="ltr" style="position:absolute;top:502px;font-size:15px;line-height:15px;height:15px;color:#10213f;white-space:nowrap;font-weight:bold;left:-133.40px;width:600px;text-align:center;transform-origin:50% 50%;transform:scaleX(1.0787);"><span>0</span></div>
<div dir="ltr" style="position:absolute;top:502px;font-size:15px;line-height:15px;height:15px;color:#3f4a60;white-space:nowrap;left:31.00px;transform-origin:0 50%;transform:scaleX(0.9683);"><span>10/02/2025</span></div>
<div dir="rtl" style="position:absolute;top:570px;font-size:19.5px;line-height:19.5px;height:19.5px;color:#10213f;white-space:nowrap;font-weight:bold;right:299.80px;transform-origin:100% 50%;transform:scaleX(0.9075);"><span>משימות</span></div>
<div dir="rtl" style="position:absolute;top:571px;font-size:16px;line-height:16px;height:16px;color:#3a9dc4;white-space:nowrap;right:986.20px;transform-origin:100% 50%;transform:scaleX(0.8708);"><span>הוספת פעילות</span></div>
<div dir="rtl" style="position:absolute;top:571px;font-size:16px;line-height:16px;height:16px;color:#36425a;white-space:nowrap;right:828.10px;transform-origin:100% 50%;transform:scaleX(0.8601);"><span>מועד סיום</span></div>
<div dir="rtl" style="position:absolute;top:609px;font-size:16px;line-height:16px;height:16px;color:#929aa8;white-space:nowrap;right:298.80px;transform-origin:100% 50%;transform:scaleX(0.8690);"><span>מועד סיום</span></div>
<div dir="rtl" style="position:absolute;top:609px;font-size:16px;line-height:16px;height:16px;color:#929aa8;white-space:nowrap;right:456.50px;transform-origin:100% 50%;transform:scaleX(0.8788);"><span>שם</span></div>
<div dir="rtl" style="position:absolute;top:609px;font-size:16px;line-height:16px;height:16px;color:#929aa8;white-space:nowrap;right:597.10px;transform-origin:100% 50%;transform:scaleX(0.9126);"><span>כותרת</span></div>
<div dir="rtl" style="position:absolute;top:609px;font-size:16px;line-height:16px;height:16px;color:#929aa8;white-space:nowrap;right:852.50px;transform-origin:100% 50%;transform:scaleX(0.9173);"><span>עדיפות</span></div>
<div dir="rtl" style="position:absolute;top:609px;font-size:16px;line-height:16px;height:16px;color:#929aa8;white-space:nowrap;right:938.80px;transform-origin:100% 50%;transform:scaleX(0.8793);"><span>אחראי</span></div>
<div dir="ltr" style="position:absolute;top:644px;font-size:15px;line-height:15px;height:15px;color:#3f4a60;white-space:nowrap;left:1509.00px;transform-origin:0 50%;transform:scaleX(0.9359);"><span>15:16 12/02/2025</span></div>
<div dir="rtl" style="position:absolute;top:644px;font-size:16px;line-height:16px;height:16px;color:#10213f;white-space:nowrap;font-weight:bold;right:456.80px;transform-origin:100% 50%;transform:scaleX(0.8677);"><span>דר' קובי ענבר</span></div>
<div dir="rtl" style="position:absolute;top:644px;font-size:16px;line-height:16px;height:16px;color:#3f4a60;white-space:nowrap;right:597.10px;transform-origin:100% 50%;transform:scaleX(0.8655);"><span>הגיש מועמדות <span style="font-size:0.97em;line-height:0">- JB-108 </span>פסיכיאטר <span style="font-size:0.97em;line-height:0">- </span>יד<span style="letter-spacing:1.7px">...</span></span></div>
<div dir="ltr" style="position:absolute;top:644px;font-size:15px;line-height:15px;height:15px;color:#3f4a60;white-space:nowrap;left:901.40px;transform-origin:0 50%;transform:scaleX(0.9510);"><span>Shira Mazor</span></div>
<div dir="ltr" style="position:absolute;top:680px;font-size:15px;line-height:15px;height:15px;color:#3f4a60;white-space:nowrap;left:1509.00px;transform-origin:0 50%;transform:scaleX(0.9359);"><span>15:16 12/02/2025</span></div>
<div dir="rtl" style="position:absolute;top:680px;font-size:16px;line-height:16px;height:16px;color:#10213f;white-space:nowrap;font-weight:bold;right:456.80px;transform-origin:100% 50%;transform:scaleX(0.8613);"><span>דר עדינה גרונברג</span></div>
<div dir="rtl" style="position:absolute;top:680px;font-size:16px;line-height:16px;height:16px;color:#3f4a60;white-space:nowrap;right:597.10px;transform-origin:100% 50%;transform:scaleX(0.8655);"><span>הגיש מועמדות <span style="font-size:0.97em;line-height:0">- JB-108 </span>פסיכיאטר <span style="font-size:0.97em;line-height:0">- </span>יד<span style="letter-spacing:1.7px">...</span></span></div>
<div dir="ltr" style="position:absolute;top:680px;font-size:15px;line-height:15px;height:15px;color:#3f4a60;white-space:nowrap;left:901.40px;transform-origin:0 50%;transform:scaleX(0.9510);"><span>Shira Mazor</span></div>
<div dir="ltr" style="position:absolute;top:715px;font-size:15px;line-height:15px;height:15px;color:#3f4a60;white-space:nowrap;left:1509.00px;transform-origin:0 50%;transform:scaleX(0.9359);"><span>15:16 12/02/2025</span></div>
<div dir="rtl" style="position:absolute;top:715px;font-size:16px;line-height:16px;height:16px;color:#10213f;white-space:nowrap;font-weight:bold;right:456.80px;transform-origin:100% 50%;transform:scaleX(0.8482);"><span>מיטל כהן</span></div>
<div dir="rtl" style="position:absolute;top:715px;font-size:16px;line-height:16px;height:16px;color:#3f4a60;white-space:nowrap;right:597.10px;transform-origin:100% 50%;transform:scaleX(0.8655);"><span>הגיש מועמדות <span style="font-size:0.97em;line-height:0">- JB-108 </span>פסיכיאטר <span style="font-size:0.97em;line-height:0">- </span>יד<span style="letter-spacing:1.7px">...</span></span></div>
<div dir="ltr" style="position:absolute;top:715px;font-size:15px;line-height:15px;height:15px;color:#3f4a60;white-space:nowrap;left:901.40px;transform-origin:0 50%;transform:scaleX(0.9510);"><span>Shira Mazor</span></div>
<div dir="ltr" style="position:absolute;top:751px;font-size:15px;line-height:15px;height:15px;color:#3f4a60;white-space:nowrap;left:1509.00px;transform-origin:0 50%;transform:scaleX(0.9359);"><span>15:16 12/02/2025</span></div>
<div dir="rtl" style="position:absolute;top:750px;font-size:16px;line-height:16px;height:16px;color:#10213f;white-space:nowrap;font-weight:bold;right:456.80px;transform-origin:100% 50%;transform:scaleX(0.8596);"><span>יוליה פטרנקו</span></div>
<div dir="rtl" style="position:absolute;top:750px;font-size:16px;line-height:16px;height:16px;color:#3f4a60;white-space:nowrap;right:597.10px;transform-origin:100% 50%;transform:scaleX(0.8655);"><span>הגיש מועמדות <span style="font-size:0.97em;line-height:0">- JB-108 </span>פסיכיאטר <span style="font-size:0.97em;line-height:0">- </span>יד<span style="letter-spacing:1.7px">...</span></span></div>
<div dir="ltr" style="position:absolute;top:751px;font-size:15px;line-height:15px;height:15px;color:#3f4a60;white-space:nowrap;left:901.40px;transform-origin:0 50%;transform:scaleX(0.9510);"><span>Shira Mazor</span></div>
<div dir="ltr" style="position:absolute;top:786px;font-size:15px;line-height:15px;height:15px;color:#3f4a60;white-space:nowrap;left:1509.00px;transform-origin:0 50%;transform:scaleX(0.9359);"><span>15:16 12/02/2025</span></div>
<div dir="rtl" style="position:absolute;top:786px;font-size:16px;line-height:16px;height:16px;color:#10213f;white-space:nowrap;font-weight:bold;right:456.80px;transform-origin:100% 50%;transform:scaleX(0.8499);"><span>פנינה שפירא</span></div>
<div dir="rtl" style="position:absolute;top:786px;font-size:16px;line-height:16px;height:16px;color:#3f4a60;white-space:nowrap;right:597.10px;transform-origin:100% 50%;transform:scaleX(0.8655);"><span>הגיש מועמדות <span style="font-size:0.97em;line-height:0">- JB-108 </span>פסיכיאטר <span style="font-size:0.97em;line-height:0">- </span>יד<span style="letter-spacing:1.7px">...</span></span></div>
<div dir="ltr" style="position:absolute;top:786px;font-size:15px;line-height:15px;height:15px;color:#3f4a60;white-space:nowrap;left:901.40px;transform-origin:0 50%;transform:scaleX(0.9510);"><span>Shira Mazor</span></div>
<div dir="ltr" style="position:absolute;top:821px;font-size:15px;line-height:15px;height:15px;color:#3f4a60;white-space:nowrap;left:1509.00px;transform-origin:0 50%;transform:scaleX(0.9359);"><span>15:16 12/02/2025</span></div>
<div dir="rtl" style="position:absolute;top:821px;font-size:16px;line-height:16px;height:16px;color:#10213f;white-space:nowrap;font-weight:bold;right:456.80px;transform-origin:100% 50%;transform:scaleX(0.8409);"><span>שי ורסנו</span></div>
<div dir="rtl" style="position:absolute;top:821px;font-size:16px;line-height:16px;height:16px;color:#3f4a60;white-space:nowrap;right:597.10px;transform-origin:100% 50%;transform:scaleX(0.8655);"><span>הגיש מועמדות <span style="font-size:0.97em;line-height:0">- JB-108 </span>פסיכיאטר <span style="font-size:0.97em;line-height:0">- </span>יד<span style="letter-spacing:1.7px">...</span></span></div>
<div dir="ltr" style="position:absolute;top:821px;font-size:15px;line-height:15px;height:15px;color:#3f4a60;white-space:nowrap;left:901.40px;transform-origin:0 50%;transform:scaleX(0.9510);"><span>Shira Mazor</span></div>
<div dir="rtl" style="position:absolute;top:570px;font-size:19.5px;line-height:19.5px;height:19.5px;color:#10213f;white-space:nowrap;font-weight:bold;right:1114.00px;transform-origin:100% 50%;transform:scaleX(0.8981);"><span>משרות</span></div>
<div dir="rtl" style="position:absolute;top:571px;font-size:16px;line-height:16px;height:16px;color:#36425a;white-space:nowrap;right:1780.50px;transform-origin:100% 50%;transform:scaleX(0.8876);"><span>סה"כ מועמדים</span></div>
<div dir="rtl" style="position:absolute;top:609px;font-size:16px;line-height:16px;height:16px;color:#929aa8;white-space:nowrap;right:1112.50px;transform-origin:100% 50%;transform:scaleX(0.9033);"><span>קוד משרה</span></div>
<div dir="rtl" style="position:absolute;top:609px;font-size:16px;line-height:16px;height:16px;color:#929aa8;white-space:nowrap;right:1188.30px;transform-origin:100% 50%;transform:scaleX(0.8685);"><span>שם משרה</span></div>
<div dir="rtl" style="position:absolute;top:609px;font-size:16px;line-height:16px;height:16px;color:#929aa8;white-space:nowrap;right:1754.10px;transform-origin:100% 50%;transform:scaleX(0.9259);"><span>סה"כ</span></div>
<div dir="rtl" style="position:absolute;top:609px;font-size:16px;line-height:16px;height:16px;color:#929aa8;white-space:nowrap;right:1801.40px;transform-origin:100% 50%;transform:scaleX(0.8857);"><span>ימי פעילות</span></div>
<div dir="ltr" style="position:absolute;top:644px;font-size:15px;line-height:15px;height:15px;color:#10213f;white-space:nowrap;font-weight:bold;left:764.90px;transform-origin:0 50%;transform:scaleX(0.9472);"><span>JB-57</span></div>
<div dir="ltr" style="position:absolute;top:644px;font-size:15px;line-height:15px;height:15px;color:#10213f;white-space:nowrap;font-weight:bold;left:595.80px;transform-origin:0 50%;transform:scaleX(0.9729);"><span>Marketing Manager</span></div>
<div dir="ltr" style="position:absolute;top:644px;font-size:15px;line-height:15px;height:15px;color:#3f4a60;white-space:nowrap;left:-153.60px;width:600px;text-align:center;transform-origin:50% 50%;transform:scaleX(0.9288);"><span>10</span></div>
<div dir="ltr" style="position:absolute;top:644px;font-size:15px;line-height:15px;height:15px;color:#3f4a60;white-space:nowrap;left:-216.00px;width:600px;text-align:center;transform-origin:50% 50%;transform:scaleX(0.9508);"><span>321</span></div>
<div dir="ltr" style="position:absolute;top:680px;font-size:15px;line-height:15px;height:15px;color:#10213f;white-space:nowrap;font-weight:bold;left:764.90px;transform-origin:0 50%;transform:scaleX(0.9472);"><span>JB-36</span></div>
<div dir="ltr" style="position:absolute;top:680px;font-size:15px;line-height:15px;height:15px;color:#10213f;white-space:nowrap;font-weight:bold;left:542.40px;transform-origin:0 50%;transform:scaleX(0.9434);"><span>Human Resources Manager</span></div>
<div dir="ltr" style="position:absolute;top:680px;font-size:15px;line-height:15px;height:15px;color:#3f4a60;white-space:nowrap;left:-153.60px;width:600px;text-align:center;transform-origin:50% 50%;transform:scaleX(0.9288);"><span>10</span></div>
<div dir="ltr" style="position:absolute;top:680px;font-size:15px;line-height:15px;height:15px;color:#3f4a60;white-space:nowrap;left:-216.00px;width:600px;text-align:center;transform-origin:50% 50%;transform:scaleX(0.9508);"><span>326</span></div>
<div dir="ltr" style="position:absolute;top:715px;font-size:15px;line-height:15px;height:15px;color:#10213f;white-space:nowrap;font-weight:bold;left:764.90px;transform-origin:0 50%;transform:scaleX(0.9472);"><span>JB-34</span></div>
<div dir="ltr" style="position:absolute;top:715px;font-size:15px;line-height:15px;height:15px;color:#10213f;white-space:nowrap;font-weight:bold;left:545.00px;transform-origin:0 50%;transform:scaleX(0.9644);"><span>Corporate Magazine Writer</span></div>
<div dir="ltr" style="position:absolute;top:715px;font-size:15px;line-height:15px;height:15px;color:#3f4a60;white-space:nowrap;left:-153.60px;width:600px;text-align:center;transform-origin:50% 50%;transform:scaleX(0.9288);"><span>10</span></div>
<div dir="ltr" style="position:absolute;top:715px;font-size:15px;line-height:15px;height:15px;color:#3f4a60;white-space:nowrap;left:-216.00px;width:600px;text-align:center;transform-origin:50% 50%;transform:scaleX(0.9508);"><span>326</span></div>
<div dir="ltr" style="position:absolute;top:751px;font-size:15px;line-height:15px;height:15px;color:#10213f;white-space:nowrap;font-weight:bold;left:764.90px;transform-origin:0 50%;transform:scaleX(0.9472);"><span>JB-31</span></div>
<div dir="rtl" style="position:absolute;top:750px;font-size:16px;line-height:16px;height:16px;color:#10213f;white-space:nowrap;font-weight:bold;right:1188.50px;transform-origin:100% 50%;transform:scaleX(0.8645);"><span>מנהל תקשורת</span></div>
<div dir="ltr" style="position:absolute;top:751px;font-size:15px;line-height:15px;height:15px;color:#3f4a60;white-space:nowrap;left:-153.60px;width:600px;text-align:center;transform-origin:50% 50%;transform:scaleX(0.9288);"><span>10</span></div>
<div dir="ltr" style="position:absolute;top:751px;font-size:15px;line-height:15px;height:15px;color:#3f4a60;white-space:nowrap;left:-216.00px;width:600px;text-align:center;transform-origin:50% 50%;transform:scaleX(0.9508);"><span>326</span></div>
<div dir="ltr" style="position:absolute;top:786px;font-size:15px;line-height:15px;height:15px;color:#10213f;white-space:nowrap;font-weight:bold;left:764.90px;transform-origin:0 50%;transform:scaleX(0.9472);"><span>JB-30</span></div>
<div dir="rtl" style="position:absolute;top:786px;font-size:16px;line-height:16px;height:16px;color:#10213f;white-space:nowrap;font-weight:bold;right:1188.50px;transform-origin:100% 50%;transform:scaleX(0.8641);"><span>מנהל מפעל</span></div>
<div dir="ltr" style="position:absolute;top:786px;font-size:15px;line-height:15px;height:15px;color:#3f4a60;white-space:nowrap;left:-153.60px;width:600px;text-align:center;transform-origin:50% 50%;transform:scaleX(0.9588);"><span>6</span></div>
<div dir="ltr" style="position:absolute;top:786px;font-size:15px;line-height:15px;height:15px;color:#3f4a60;white-space:nowrap;left:-216.00px;width:600px;text-align:center;transform-origin:50% 50%;transform:scaleX(0.9508);"><span>326</span></div>
<div dir="ltr" style="position:absolute;top:821px;font-size:15px;line-height:15px;height:15px;color:#10213f;white-space:nowrap;font-weight:bold;left:764.90px;transform-origin:0 50%;transform:scaleX(0.9472);"><span>JB-72</span></div>
<div dir="rtl" style="position:absolute;top:821px;font-size:16px;line-height:16px;height:16px;color:#10213f;white-space:nowrap;font-weight:bold;right:1188.50px;transform-origin:100% 50%;transform:scaleX(0.9001);"><span>עובד<span style="font-size:0.97em;line-height:0">/</span>ת מעבדה</span></div>
<div dir="ltr" style="position:absolute;top:821px;font-size:15px;line-height:15px;height:15px;color:#3f4a60;white-space:nowrap;left:-153.60px;width:600px;text-align:center;transform-origin:50% 50%;transform:scaleX(0.9588);"><span>6</span></div>
<div dir="ltr" style="position:absolute;top:821px;font-size:15px;line-height:15px;height:15px;color:#3f4a60;white-space:nowrap;left:-216.00px;width:600px;text-align:center;transform-origin:50% 50%;transform:scaleX(0.9508);"><span>275</span></div>
</body></html>
